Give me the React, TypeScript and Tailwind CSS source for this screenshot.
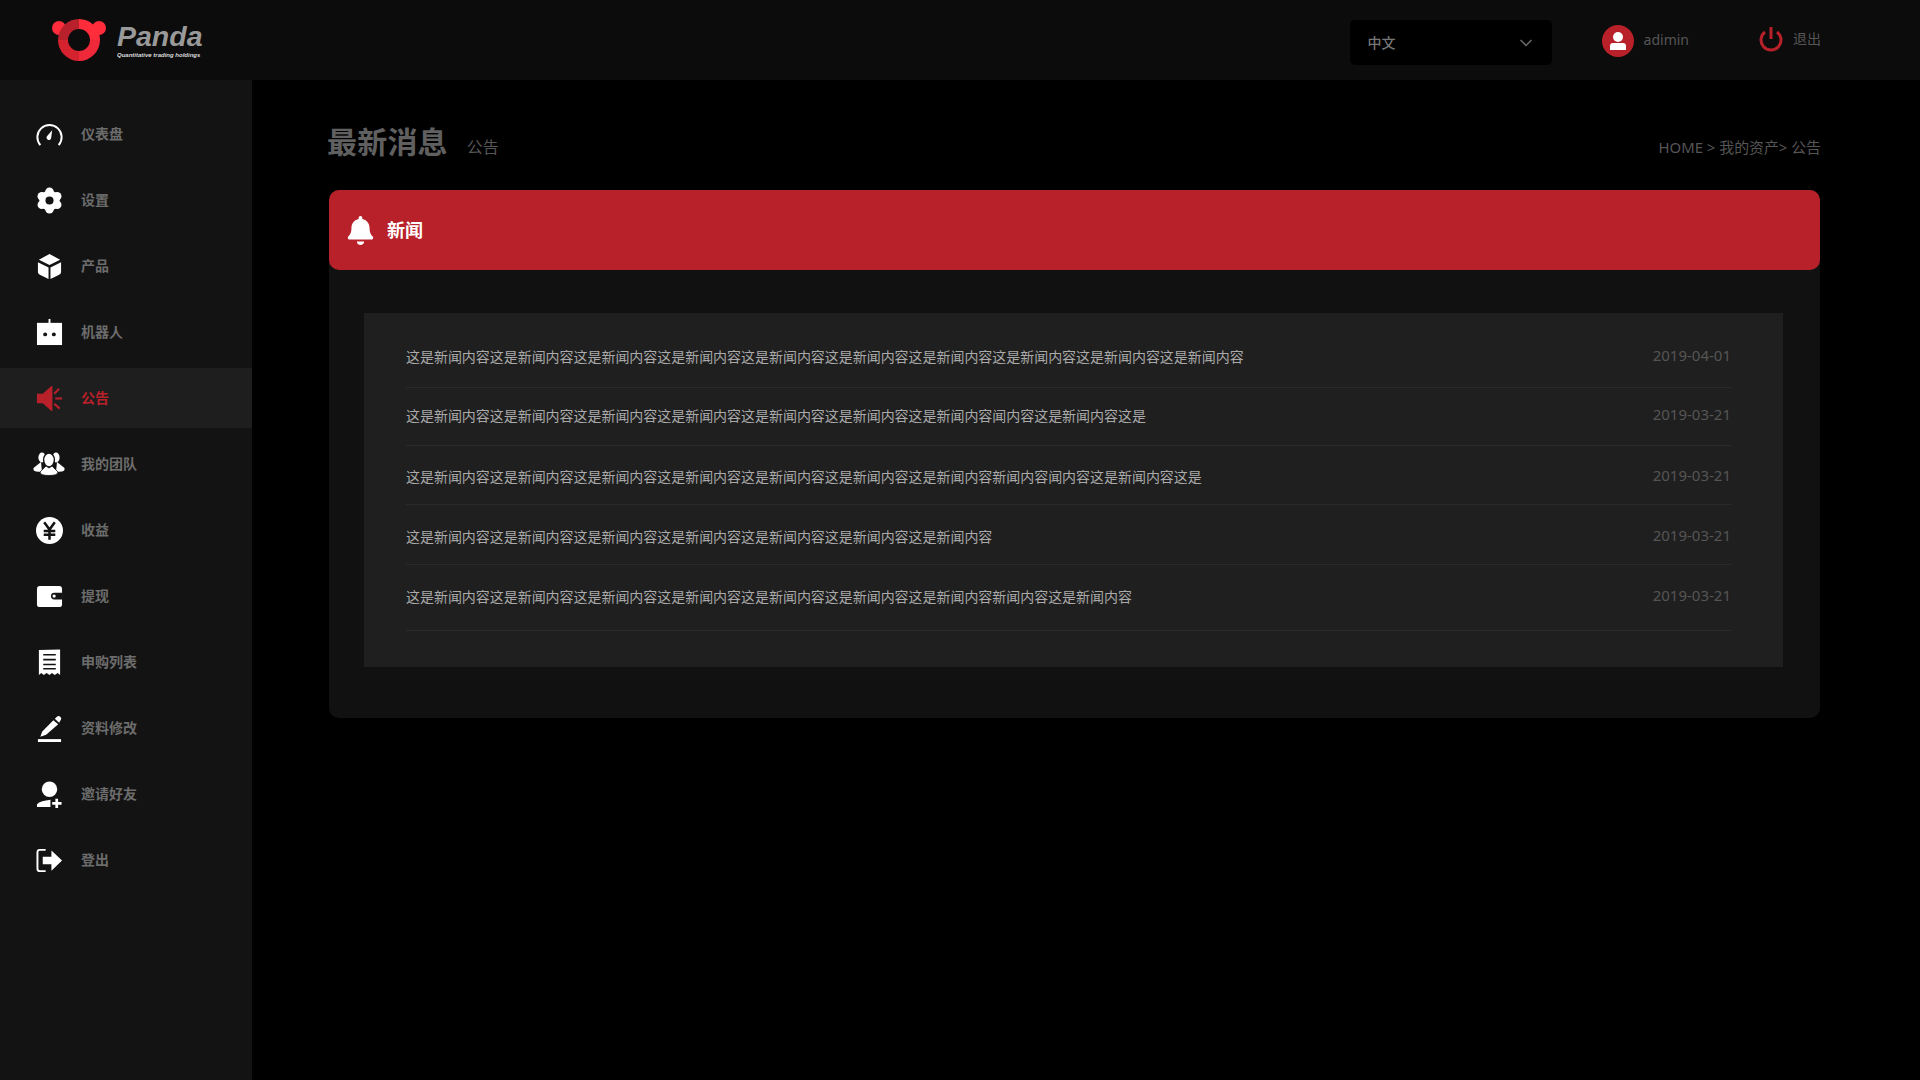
import { ReactNode } from 'react';
import { FaBell } from 'react-icons/fa';
import { ChevronDown } from 'lucide-react';

const Svg = ({ children, className = 'fill-white' }: { children: ReactNode; className?: string }) => (
  <svg viewBox="0 0 28 28" className={`w-[27px] h-[27px] ${className}`}>
    {children}
  </svg>
);

const GaugeIcon = () => (
  <Svg>
    <path d="M4.5 25 A12.6 12.6 0 1 1 23.5 25" fill="none" stroke="#fff" strokeWidth="2" />
    <path d="M16.8 9.5 L15.7 17.5 A2.4 2.4 0 1 1 11.6 15.6 Z" />
  </Svg>
);

const GearIcon = () => (
  <Svg>
    <circle cx="14" cy="14" r="10.5" />
    <circle cx="14" cy="5" r="4.4" />
    <circle cx="14" cy="23" r="4.4" />
    <circle cx="6" cy="9.5" r="4.4" />
    <circle cx="22" cy="9.5" r="4.4" />
    <circle cx="6" cy="18.5" r="4.4" />
    <circle cx="22" cy="18.5" r="4.4" />
    <circle cx="14" cy="14" r="4.2" fill="#131313" />
  </Svg>
);

const CubeIcon = () => (
  <Svg>
    <path d="M14 1 L25 7 L14 12.5 L3 7 Z" />
    <path d="M2 9.5 L13 15 L13 27 L5 23 Q2 22 2 20 Z" />
    <path d="M26 9.5 L15 15 L15 27 L23 23 Q26 22 26 20 Z" />
  </Svg>
);

const RobotIcon = () => (
  <Svg>
    <rect x="1" y="4" width="26" height="23" />
    <rect x="13" y="0" width="2" height="5" />
    <circle cx="9.5" cy="16" r="2" fill="#131313" />
    <circle cx="18.5" cy="16" r="2" fill="#131313" />
  </Svg>
);

const HornIcon = () => (
  <Svg className="fill-[#b9212a]">
    <path d="M1 9 L7 9 L16 1 L17 1 L17 27 L16 27 L7 19 L1 19 Z" />
    <path d="M19 9 L24 4" stroke="#b9212a" strokeWidth="2.2" />
    <path d="M20 14 L27 14" stroke="#b9212a" strokeWidth="2.2" />
    <path d="M19 19.5 L24.5 24.5" stroke="#b9212a" strokeWidth="2.2" />
  </Svg>
);

const TeamIcon = () => (
  <svg viewBox="0 0 32 24" className="w-8 h-6 fill-white">
    <ellipse cx="9" cy="5.5" rx="3.6" ry="5" />
    <ellipse cx="23" cy="5.5" rx="3.6" ry="5" />
    <path d="M8 10 L0.5 16 Q0 19 3 19.5 L9 20 Z" />
    <path d="M24 10 L31.5 16 Q32 19 29 19.5 L23 20 Z" />
    <ellipse cx="16" cy="8" rx="5.4" ry="7" stroke="#131313" strokeWidth="1.4" />
    <path d="M13 14 L7 20 Q7 23.5 16 23.5 Q25 23.5 25 20 L19 14 L16 16 Z" stroke="#131313" strokeWidth="0.8" />
  </svg>
);

const YenIcon = () => (
  <Svg>
    <circle cx="14" cy="14" r="14" />
    <path d="M8.5 5.5 L14 13 L19.5 5.5 M14 13 L14 23.5 M8 14.5 L20 14.5 M8 18.5 L20 18.5" fill="none" stroke="#131313" strokeWidth="2.6" />
  </Svg>
);

const WalletIcon = () => (
  <Svg>
    <rect x="1" y="3" width="26" height="22" rx="3" />
    <path d="M27 10 L19 10 Q15.5 10 15.5 13.5 Q15.5 17 19 17 L27 17 Z" fill="#131313" />
    <circle cx="18.8" cy="13.5" r="1.7" />
  </Svg>
);

const ReceiptIcon = () => (
  <Svg>
    <path d="M3 1 L25 0.5 L25 27 L22.5 25 L19.5 27 L16.5 25 L14 27 L11 25 L8 27 L5.5 25 L3 27 Z" />
    <path d="M7.5 6 L20.5 6 M7.5 11 L20.5 11 M7.5 16 L20.5 16 M7.5 20.5 L20.5 20.5" stroke="#131313" strokeWidth="1.6" />
  </Svg>
);

const PenIcon = () => (
  <Svg>
    <path d="M18 5.5 L23 9.5 L10.5 20.5 L4.5 22.5 L6.5 17 Z" />
    <path d="M19.5 4 L22 1.5 Q23.5 0.5 25.5 2 Q27 4 25.5 5.5 L24 8 Z" />
    <rect x="2" y="25" width="24" height="3" />
  </Svg>
);

const AddUserIcon = () => (
  <Svg>
    <circle cx="14" cy="8.5" r="8" />
    <path d="M1 27 L1 24 Q5 20.5 15 19.5 L15 27 Z" />
    <path d="M21.5 18.5 L21.5 28 M16.8 23.3 L26.5 23.3" stroke="#fff" strokeWidth="2.8" />
  </Svg>
);

const LogoutIcon = () => (
  <Svg>
    <path d="M10 3 L4 3 Q1.5 3 1.5 5.5 L1.5 22.5 Q1.5 25 4 25 L10 25" fill="none" stroke="#fff" strokeWidth="2" />
    <path d="M7 10 L16 10 L16 3.5 L27 14 L16 24.5 L16 18 L7 18 Z" />
  </Svg>
);

const menu = [
  { label: '仪表盘', icon: <GaugeIcon /> },
  { label: '设置', icon: <GearIcon /> },
  { label: '产品', icon: <CubeIcon /> },
  { label: '机器人', icon: <RobotIcon /> },
  { label: '公告', icon: <HornIcon />, active: true },
  { label: '我的团队', icon: <TeamIcon /> },
  { label: '收益', icon: <YenIcon /> },
  { label: '提现', icon: <WalletIcon /> },
  { label: '申购列表', icon: <ReceiptIcon /> },
  { label: '资料修改', icon: <PenIcon /> },
  { label: '邀请好友', icon: <AddUserIcon /> },
  { label: '登出', icon: <LogoutIcon /> },
];

const news = [
  {
    text: '这是新闻内容这是新闻内容这是新闻内容这是新闻内容这是新闻内容这是新闻内容这是新闻内容这是新闻内容这是新闻内容这是新闻内容',
    date: '2019-04-01',
    row: 'h-[60px] pt-[19px]',
  },
  {
    text: '这是新闻内容这是新闻内容这是新闻内容这是新闻内容这是新闻内容这是新闻内容这是新闻内容闻内容这是新闻内容这是',
    date: '2019-03-21',
    row: 'h-[58px] pt-[18px]',
  },
  {
    text: '这是新闻内容这是新闻内容这是新闻内容这是新闻内容这是新闻内容这是新闻内容这是新闻内容新闻内容闻内容这是新闻内容这是',
    date: '2019-03-21',
    row: 'h-[59px] pt-[21px]',
  },
  {
    text: '这是新闻内容这是新闻内容这是新闻内容这是新闻内容这是新闻内容这是新闻内容这是新闻内容',
    date: '2019-03-21',
    row: 'h-[60px] pt-[22px]',
  },
  {
    text: '这是新闻内容这是新闻内容这是新闻内容这是新闻内容这是新闻内容这是新闻内容这是新闻内容新闻内容这是新闻内容',
    date: '2019-03-21',
    row: 'h-[66px] pt-[22px]',
  },
];

const Logo = () => (
  <div className="flex items-center gap-[10px]">
    <svg viewBox="0 0 56 48" className="w-14 h-12">
      <circle cx="8" cy="12" r="7" fill="#ff2c3c" />
      <circle cx="48" cy="12" r="7" fill="#ff2c3c" />
      <path d="M28 3 A21 21 0 0 0 7 24 L17 24 A11 11 0 0 1 28 13 Z" fill="#b8202c" />
      <path d="M28 3 A21 21 0 0 1 49 24 L39 24 A11 11 0 0 0 28 13 Z" fill="#ff2c3c" />
      <path d="M7 24 A21 21 0 0 0 28 45 L28 35 A11 11 0 0 1 17 24 Z" fill="#d4232f" />
      <path d="M49 24 A21 21 0 0 1 28 45 L28 35 A11 11 0 0 0 39 24 Z" fill="#f0293a" />
    </svg>
    <div className="flex flex-col font-['Liberation_Sans',sans-serif] italic">
      <span className="text-[28.5px] leading-[30px] font-bold text-[#999]">Panda</span>
      <span className="text-[6px] leading-[8px] font-bold text-[#ddd] whitespace-nowrap">Quantitative trading holdings</span>
    </div>
  </div>
);

export default function App() {
  return (
    <div className="h-screen w-full bg-black flex flex-col overflow-hidden font-['Noto_Sans','Noto_Sans_CJK_SC',sans-serif]">
      <header className="h-20 shrink-0 bg-[#0c0c0c] flex items-center pl-[51px] pr-[99px]">
        <Logo />
        <div className="ml-auto w-[202px] h-[45px] mt-[5px] bg-black rounded-[5px] flex items-center justify-between pl-[18px] pr-[16px] text-sm text-[#777] font-medium">
          中文
          <ChevronDown className="w-5 h-5 text-[#666]" />
        </div>
        <div className="ml-[50px] mt-[1px] flex items-center gap-[10px]">
          <div className="w-8 h-8 rounded-full bg-[#b9212a] flex flex-col items-center justify-center">
            <div className="w-[10px] h-[10px] rounded-full bg-white" />
            <div className="w-[16px] h-[7px] mt-[1px] rounded-t-[3px] bg-white" />
          </div>
          <span className="text-sm text-[#555] -mt-[2px]">adimin</span>
        </div>
        <div className="ml-[70px] flex items-center gap-[10px]">
          <svg viewBox="0 0 24 28" className="w-6 h-7" fill="none" stroke="#b9212a" strokeWidth="3">
            <path d="M12 1 L12 13" />
            <path d="M6 6 A10 10 0 1 0 18 6" />
          </svg>
          <span className="text-sm text-[#555] -mt-[2px]">退出</span>
        </div>
      </header>

      <div className="flex-1 flex min-h-0">
        <aside className="w-[252px] shrink-0 bg-[#131313] pt-6">
          {menu.map((item) => (
            <div
              key={item.label}
              className={`h-[60px] mb-[6px] flex items-center pl-[33px] ${item.active ? 'bg-[#1e1e1e]' : ''}`}
            >
              <span className="w-8 h-8 flex items-center justify-center">{item.icon}</span>
              <span className={`ml-[16px] text-sm font-bold ${item.active ? 'text-[#b9212a]' : 'text-[#6c6c6c]'}`}>
                {item.label}
              </span>
            </div>
          ))}
        </aside>

        <main className="flex-1 pl-[77px] pr-[100px]">
          <div className="h-[110px] flex items-center -ml-[2px] pt-[13px]">
            <h1 className="text-[30px] tracking-[0.2px] font-bold text-[#606060]">最新消息</h1>
            <span className="ml-[19px] mt-[11px] text-base text-[#555]">公告</span>
            <span className="ml-auto mt-[12px] -mr-[1px] text-[14.9px] text-[#555]">HOME &gt; 我的资产&gt; 公告</span>
          </div>

          <section className="bg-[#111] rounded-[10px] h-[528px]">
            <div className="h-20 bg-[#b9212a] rounded-[10px] flex items-center pl-[17px]">
              <FaBell className="w-[29px] h-[29px] text-white" />
              <span className="ml-[12px] text-lg font-bold text-white">新闻</span>
            </div>
            <div className="mt-[43px] mx-[35px] mr-[37px] h-[354px] bg-[#1f1f1f] pt-[15px] pl-[42px] pr-[52px]">
              {news.map((n, i) => (
                <div key={i} className={`${n.row} border-b border-[#2a2a2a] flex justify-between items-start`}>
                  <span className="text-sm leading-[20px] tracking-[-0.04px] text-[#aaa]">{n.text}</span>
                  <span className="text-[15px] leading-[20px] -mt-[2px] text-[#555]">{n.date}</span>
                </div>
              ))}
            </div>
          </section>
        </main>
      </div>
    </div>
  );
}
